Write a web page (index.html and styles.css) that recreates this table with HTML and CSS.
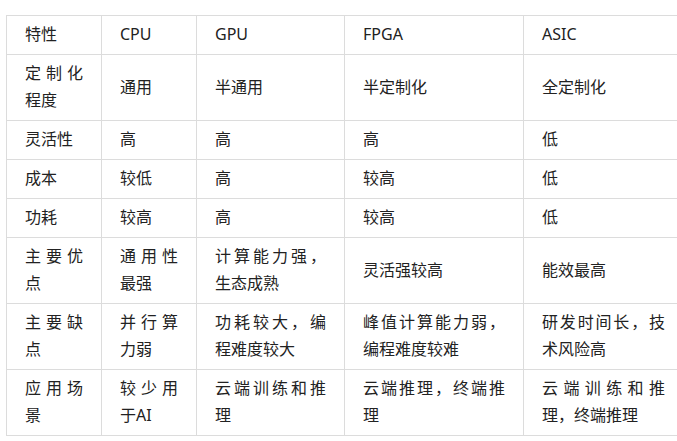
FILE: index.html
```html
<!DOCTYPE html>
<html lang="zh-CN">
<head>
<meta charset="utf-8">
<title>CPU GPU FPGA ASIC 对比</title>
<link rel="stylesheet" href="styles.css">
</head>
<body>
<table class="cmp">
  <colgroup>
    <col class="c1"><col class="c2"><col class="c3"><col class="c4"><col class="c5">
  </colgroup>
  <tbody>
    <tr><td>特性</td><td>CPU</td><td>GPU</td><td>FPGA</td><td>ASIC</td></tr>
    <tr><td>定制化程度</td><td>通用</td><td>半通用</td><td>半定制化</td><td>全定制化</td></tr>
    <tr><td>灵活性</td><td>高</td><td>高</td><td>高</td><td>低</td></tr>
    <tr><td>成本</td><td>较低</td><td>高</td><td>较高</td><td>低</td></tr>
    <tr><td>功耗</td><td>较高</td><td>高</td><td>较高</td><td>低</td></tr>
    <tr><td>主要优点</td><td>通用性最强</td><td>计算能力强，生态成熟</td><td>灵活强较高</td><td>能效最高</td></tr>
    <tr><td>主要缺点</td><td>并行算力弱</td><td>功耗较大，编程难度较大</td><td>峰值计算能力弱，编程难度较难</td><td>研发时间长，技术风险高</td></tr>
    <tr><td>应用场景</td><td>较少用于AI</td><td>云端训练和推理</td><td>云端推理，终端推理</td><td>云端训练和推理，终端推理</td></tr>
  </tbody>
</table>
</body>
</html>
```

FILE: styles.css
```css
html, body {
  margin: 0;
  padding: 0;
  background: #fff;
}
body {
  padding: 15px 0 0 6px;
  overflow: hidden;
  font-family: "Noto Sans", "Noto Sans CJK SC", sans-serif;
  font-size: 16px;
  color: #222;
}
.cmp {
  border-collapse: collapse;
  table-layout: fixed;
  width: 677px;
}
.c1 { width: 95px; }
.c2 { width: 95px; }
.c3 { width: 148px; }
.c4 { width: 179px; }
.c5 { width: 160px; }
.cmp td {
  border: 1px solid #dcdcdc;
  padding: 5px 18px 6px 18px;
  line-height: 27px;
  text-align: justify;
  vertical-align: middle;
  word-break: normal;
}
```
